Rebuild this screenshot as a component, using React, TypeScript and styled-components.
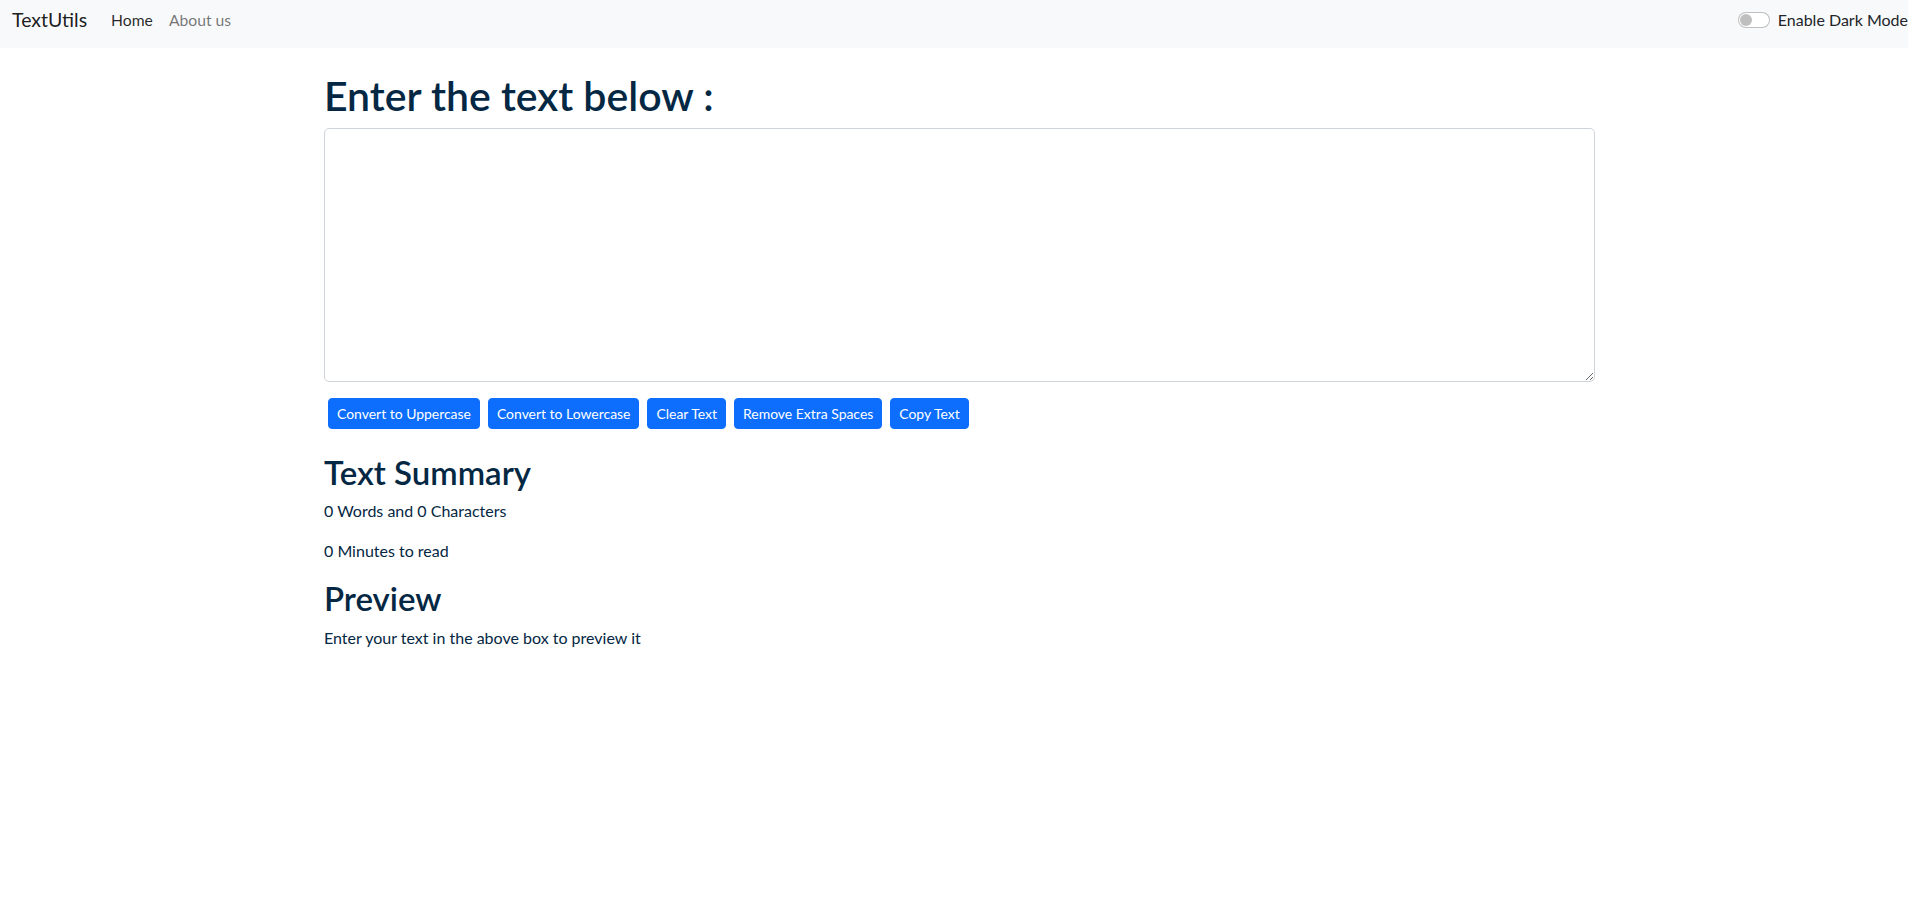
import React, { useState } from "react";
import styled, { createGlobalStyle } from "styled-components";

const GlobalStyle = createGlobalStyle`
  html, body {
    margin: 0;
    padding: 0;
    background: #ffffff;
    font-family: "Lato", "Noto Sans", sans-serif;
    font-size: 16px;
    line-height: 1.5;
    color: #212529;
  }
  * { box-sizing: border-box; }
`;

const NavBar = styled.nav`
  display: flex;
  align-items: center;
  height: 48px;
  padding: 0 0 8px 12px;
  background: #f8f9fa;
  overflow: hidden;
`;

const Brand = styled.a`
  font-size: 19.5px;
  line-height: 30px;
  color: rgba(0, 0, 0, 0.9);
  text-decoration: none;
  margin-right: 16px;
  white-space: nowrap;
`;

const NavList = styled.ul`
  display: flex;
  list-style: none;
  margin: 0;
  padding: 0;
`;

const NavLink = styled.a<{ $active?: boolean }>`
  display: block;
  padding: 0 8px;
  font-size: 15.7px;
  line-height: 24px;
  text-decoration: none;
  color: ${(p) => (p.$active ? "rgba(0, 0, 0, 0.85)" : "rgba(0, 0, 0, 0.55)")};
  white-space: nowrap;
`;

const SwitchWrap = styled.label`
  display: flex;
  align-items: center;
  gap: 8px;
  margin-left: auto;
  cursor: pointer;
  white-space: nowrap;
`;

const SwitchTrack = styled.span`
  position: relative;
  display: block;
  width: 32px;
  height: 16px;
  border: 1px solid rgba(0, 0, 0, 0.25);
  border-radius: 8px;
  background: #ffffff;
  flex: none;
`;

const SwitchKnob = styled.span`
  position: absolute;
  left: 1px;
  top: 1px;
  width: 12px;
  height: 12px;
  border-radius: 50%;
  background: rgba(0, 0, 0, 0.25);
`;

const SwitchLabel = styled.span`
  font-size: 16px;
  line-height: 24px;
  color: #212529;
`;

const Main = styled.main`
  display: flex;
  flex-direction: column;
  width: 1271px;
  margin-left: 324px;
  color: #042743;
`;

const Heading = styled.h1`
  margin: 24px 0 8px;
  font-size: 41px;
  font-weight: 600;
  line-height: 48px;
`;

const TextArea = styled.textarea`
  display: block;
  width: 100%;
  height: 254px;
  padding: 6px 12px;
  font-family: "Lato", sans-serif;
  font-size: 16px;
  line-height: 24px;
  color: #212529;
  background: #ffffff;
  border: 1px solid #ced4da;
  border-radius: 5px;
  outline: none;
`;

const ButtonRow = styled.div`
  display: flex;
  gap: 8px;
  margin-top: 16px;
  padding-left: 4px;
`;

const Button = styled.button`
  height: 31px;
  padding: 4px 8px;
  font-family: "Lato", sans-serif;
  font-size: 13.95px;
  line-height: 21px;
  color: #ffffff;
  background: #0d6efd;
  border: 1px solid #0d6efd;
  border-radius: 4px;
  cursor: pointer;
  white-space: nowrap;
`;

const SubHeading = styled.h2<{ $top: number }>`
  margin: ${(p) => p.$top}px 0 8px;
  font-size: 33px;
  font-weight: 600;
  line-height: 38.4px;
`;

const Para = styled.p<{ $bottom?: number }>`
  margin: 0 0 ${(p) => p.$bottom ?? 16}px;
  font-size: 16px;
  line-height: 24px;
`;

export default function App() {
  const [text, setText] = useState("");
  const words = text.split(/\s+/).filter((w) => w.length > 0).length;
  const minutes = 0.008 * words;

  return (
    <>
      <GlobalStyle />
      <NavBar>
        <Brand href="#">TextUtils</Brand>
        <NavList>
          <li>
            <NavLink href="#" $active>
              Home
            </NavLink>
          </li>
          <li>
            <NavLink href="#">About us</NavLink>
          </li>
        </NavList>
        <SwitchWrap>
          <SwitchTrack>
            <SwitchKnob />
          </SwitchTrack>
          <SwitchLabel>Enable Dark Mode</SwitchLabel>
        </SwitchWrap>
      </NavBar>
      <Main>
        <Heading>Enter the text below :</Heading>
        <TextArea value={text} onChange={(e) => setText(e.target.value)} />
        <ButtonRow>
          <Button onClick={() => setText(text.toUpperCase())}>Convert to Uppercase</Button>
          <Button onClick={() => setText(text.toLowerCase())}>Convert to Lowercase</Button>
          <Button onClick={() => setText("")}>Clear Text</Button>
          <Button onClick={() => setText(text.split(/[ ]+/).join(" "))}>Remove Extra Spaces</Button>
          <Button>Copy Text</Button>
        </ButtonRow>
        <SubHeading $top={24}>Text Summary</SubHeading>
        <Para>
          {words} Words and {text.length} Characters
        </Para>
        <Para>{minutes} Minutes to read</Para>
        <SubHeading $top={0}>Preview</SubHeading>
        <Para>{text.length > 0 ? text : "Enter your text in the above box to preview it"}</Para>
      </Main>
    </>
  );
}
